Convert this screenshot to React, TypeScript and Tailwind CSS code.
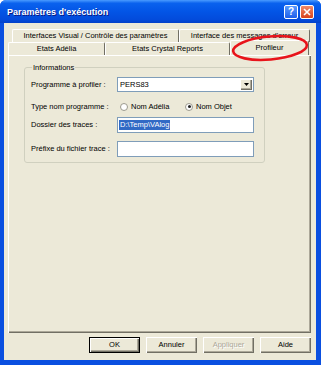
import React from "react";

const bevel =
  "shadow-[inset_1px_1px_0_#ffffff,inset_-1px_-1px_0_#716F64,inset_-2px_-2px_0_#ACA899]";

function Tab({ label, width, selected }: { label: string; width: string; selected?: boolean }) {
  return (
    <div
      className={`${width} ${
        selected ? "h-[15px] -mt-[2px] bg-[#ECE9D8] relative z-10" : "h-[13px] bg-[#ECE9D8]"
      } flex items-center justify-center border-t border-l border-t-white border-l-white border-r border-r-[#716F64] rounded-t-[2px] text-[7.5px] leading-none text-black whitespace-nowrap`}
    >
      {label}
    </div>
  );
}

function Radio({ label, checked }: { label: string; checked?: boolean }) {
  return (
    <div className="flex items-center gap-[3px]">
      <div className="w-[8px] h-[8px] rounded-full border border-[#9C9A8E] bg-white flex items-center justify-center">
        {checked && <div className="w-[3px] h-[3px] rounded-full bg-[#222]" />}
      </div>
      <span>{label}</span>
    </div>
  );
}

function Button({ label, isDefault, disabled }: { label: string; isDefault?: boolean; disabled?: boolean }) {
  return (
    <div
      className={`w-[51px] h-[16px] flex items-center justify-center bg-[#ECE9D8] ${bevel} ${
        isDefault ? "border border-black" : ""
      } ${disabled ? "text-[#ACA899] [text-shadow:1px_1px_0_#fff]" : "text-black"}`}
    >
      {label}
    </div>
  );
}

export default function App() {
  return (
    <div className="relative w-[321px] h-[365px] flex flex-col bg-[#0A4FE0] rounded-t-[6px] overflow-hidden font-['Liberation_Sans',Arial,sans-serif] text-[7.5px] leading-none">
      {/* Title bar */}
      <div className="h-[23px] flex items-center justify-between pl-[7px] pr-[7px] bg-[linear-gradient(180deg,#4A9BFF_0%,#0A62EE_14%,#0355E6_50%,#034BDB_85%,#0341C9_100%)]">
        <span className="text-white font-bold text-[9px] [text-shadow:1px_1px_0_#0A1883] pt-[1px]">
          Paramètres d'exécution
        </span>
        <div className="flex items-center gap-[2px] pt-[1px]">
          <div className="w-[14px] h-[14px] rounded-[2px] border border-white bg-[linear-gradient(180deg,#5A9BFF,#1E5FEA)] flex items-center justify-center text-white font-bold text-[10px]">
            ?
          </div>
          <div className="w-[14px] h-[14px] rounded-[2px] border border-white bg-[linear-gradient(180deg,#F08A6A,#D8431C)] flex items-center justify-center">
            <svg width="8" height="8" viewBox="0 0 8 8">
              <path d="M1 1 L7 7 M7 1 L1 7" stroke="white" strokeWidth="1.6" />
            </svg>
          </div>
        </div>
      </div>

      {/* Body */}
      <div className="flex-1 ml-[4px] mr-[5px] mb-[5px] bg-[#ECE9D8] flex flex-col pt-[6px] pl-[4px] pr-[5px]">
        {/* Tab rows */}
        <div className="flex ml-[4px] h-[13px]">
          <Tab label="Interfaces Visual / Contrôle des paramètres" width="w-[167px]" />
          <Tab label="Interface des messages d'erreur" width="w-[131px]" />
        </div>
        <div className="flex h-[13px] items-end">
          <Tab label="Etats Adélia" width="w-[97px]" />
          <Tab label="Etats Crystal Reports" width="w-[125px]" />
          <Tab label="Profileur" width="w-[79px]" selected />
        </div>

        {/* Tab panel */}
        <div className={`h-[278px] w-[303px] bg-[#ECE9D8] ${bevel} pt-[8px] pl-[16px]`}>
          <fieldset className="w-[241px] h-[100px] border border-[#D0D0BF] rounded-[3px] pl-[6px]">
            <legend className="ml-[1px] px-[1px] leading-[9px]">Informations</legend>
            <div className="flex items-center h-[15px] mt-[5px]">
              <span className="w-[86px]">Programme à profiler :</span>
              <div className="w-[137px] h-[15px] border border-[#7F9DB9] bg-white flex items-center justify-between pl-[2px] pr-[1px]">
                <span>PERS83</span>
                <div className={`w-[12px] h-[11px] bg-[#ECE9D8] ${bevel} flex items-center justify-center`}>
                  <svg width="5" height="3" viewBox="0 0 5 3">
                    <path d="M0 0 H5 L2.5 3 Z" fill="black" />
                  </svg>
                </div>
              </div>
            </div>
            <div className="flex items-center h-[15px] mt-[7px]">
              <span className="w-[89px]">Type nom programme :</span>
              <div className="w-[65px]">
                <Radio label="Nom Adélia" />
              </div>
              <Radio label="Nom Objet" checked />
            </div>
            <div className="flex items-center h-[16px] mt-[3px]">
              <span className="w-[86px]">Dossier des traces :</span>
              <div className="w-[137px] h-[16px] border border-[#7F9DB9] bg-white flex items-center pl-[1px]">
                <span className="bg-[#316AC5] text-white px-[1px] py-[1px]">{"D:\\Temp\\VAlog"}</span>
              </div>
            </div>
            <div className="flex items-center h-[16px] mt-[8px]">
              <span className="w-[86px]">Préfixe du fichier trace :</span>
              <div className="w-[137px] h-[16px] border border-[#7F9DB9] bg-white" />
            </div>
          </fieldset>
        </div>

        {/* Dialog buttons */}
        <div className="flex justify-end gap-[6px] mt-[4px]">
          <Button label="OK" isDefault />
          <Button label="Annuler" />
          <Button label="Appliquer" disabled />
          <Button label="Aide" />
        </div>
      </div>

      {/* Red annotation ellipse */}
      <svg className="absolute z-20 left-[229px] top-[33px] pointer-events-none" width="82" height="30" viewBox="0 0 82 30">
        <ellipse cx="41" cy="15" rx="37" ry="11.5" fill="none" stroke="#E8141B" strokeWidth="2.6" transform="rotate(-5 41 15)" />
      </svg>
    </div>
  );
}
